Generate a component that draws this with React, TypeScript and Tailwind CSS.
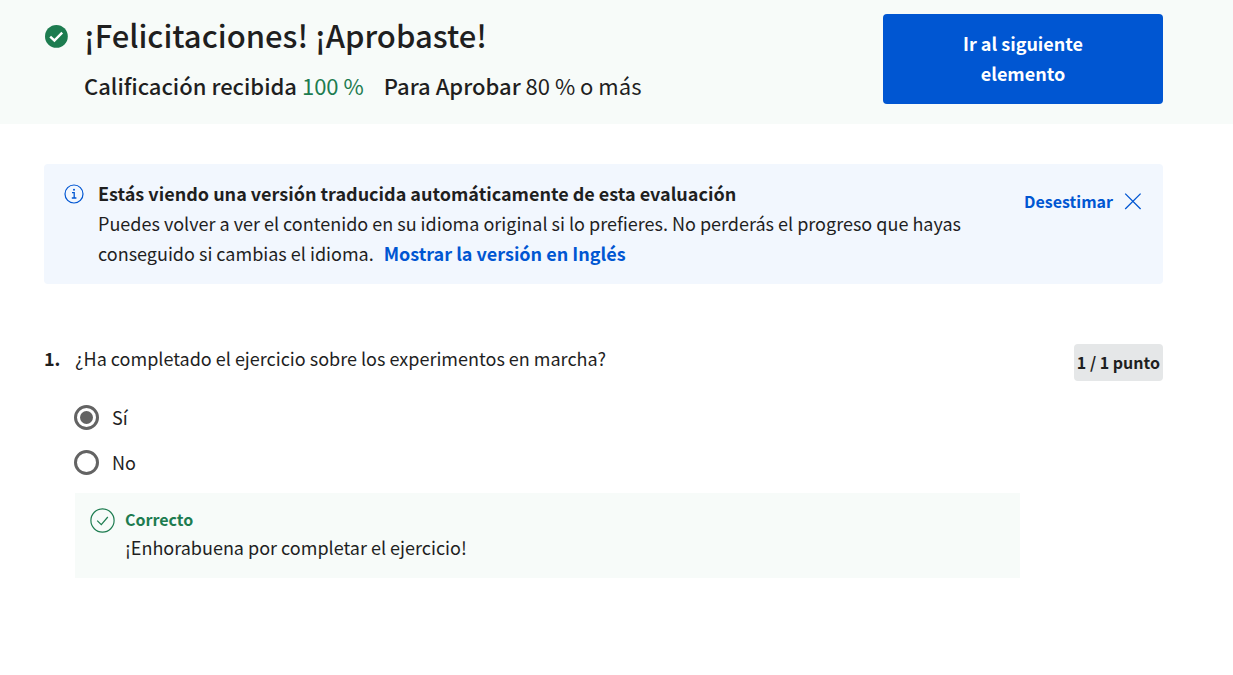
import { useState } from 'react';

function PassedIcon() {
  return (
    <svg viewBox="0 0 24 24" className="size-6 shrink-0" aria-hidden="true">
      <circle cx="12.4" cy="12.4" r="11.4" fill="#1d7c50" />
      <path d="M6.2 12.6l4.2 3.9 7.8-7.9" fill="none" stroke="#fff" strokeWidth="2.4" />
    </svg>
  );
}

function InfoIcon() {
  return (
    <svg viewBox="0 0 20 20" className="mt-1.5 size-5 shrink-0" aria-hidden="true" fill="none" stroke="#0056d2">
      <circle cx="10" cy="10" r="9" strokeWidth="1.2" />
      <path d="M8 8.7h2.2v5M7.8 14h4.6" strokeWidth="1.3" />
      <circle cx="10" cy="5.8" r="1" fill="#0056d2" stroke="none" />
    </svg>
  );
}

function CloseIcon() {
  return (
    <svg viewBox="0 0 20 20" className="size-5" aria-hidden="true" fill="none" stroke="#0056d2" strokeWidth="1.3">
      <path d="M2.2 2.6l15.4 15.4M17.6 2.6l-15.4 15.4" />
    </svg>
  );
}

function CorrectIcon() {
  return (
    <svg viewBox="0 0 25 25" className="size-[25px] shrink-0" aria-hidden="true" fill="none" stroke="#1d7c50" strokeWidth="1.2">
      <circle cx="12.5" cy="12.5" r="11.6" />
      <path d="M7.2 12.6l4.1 4 6.5-7.6" />
    </svg>
  );
}

const options = ['Sí', 'No'];

export default function App() {
  const [answer, setAnswer] = useState('Sí');
  const [showNotice, setShowNotice] = useState(true);

  return (
    <main className="min-h-screen bg-white font-['Noto_Sans_CJK_SC',sans-serif] text-lg leading-[30px] text-[#1f1f1f]">
      <header className="flex items-start justify-between bg-[#f7fbf9] pt-3.5 pr-[70px] pb-5 pl-11">
        <div className="flex gap-4">
          <div className="pt-2.5">
            <PassedIcon />
          </div>
          <div>
            <h1 className="text-[31px] leading-[42px] font-medium">¡Felicitaciones! ¡Aprobaste!</h1>
            <p className="mt-[13px] flex gap-5 text-[22px] leading-8">
              <span>
                <span className="font-medium">Calificación recibida</span> <span className="text-[#1d7c50]">100 %</span>
              </span>
              <span>
                <span className="font-medium">Para Aprobar</span> 80 % o más
              </span>
            </p>
          </div>
        </div>
        <button type="button" className="w-70 rounded bg-[#0056d2] px-16 pt-3.5 pb-4 font-bold text-white">
          Ir al siguiente elemento
        </button>
      </header>

      <div className="pt-10 pr-[70px] pb-10 pl-11">
        {showNotice && (
          <section className="flex items-start rounded bg-[#f2f7fe] px-5 pt-3.5 pb-4">
            <InfoIcon />
            <div className="ml-3.5 max-w-[880px] grow">
              <h2 className="font-bold">Estás viendo una versión traducida automáticamente de esta evaluación</h2>
              <p>
                Puedes volver a ver el contenido en su idioma original si lo prefieres. No perderás el progreso que hayas
                conseguido si cambias el idioma.
                <a href="#original" className="ml-2.5 font-bold text-[#0056d2]">
                  Mostrar la versión en Inglés
                </a>
              </p>
            </div>
            <button
              type="button"
              onClick={() => setShowNotice(false)}
              className="mt-[11px] ml-auto flex items-center gap-2.5 text-base font-bold text-[#0056d2]"
            >
              Desestimar
              <CloseIcon />
            </button>
          </section>
        )}

        <section className="mt-15 flex items-start">
          <span className="w-[31px] shrink-0 leading-7 font-bold">1.</span>
          <fieldset className="min-w-0 grow">
            <legend className="leading-7">¿Ha completado el ejercicio sobre los experimentos en marcha?</legend>
            <div className="mt-[30px] flex flex-col gap-[15px]">
              {options.map((option) => (
                <label key={option} className="flex items-center gap-[13px]">
                  <input
                    type="radio"
                    name="answer"
                    checked={answer === option}
                    onChange={() => setAnswer(option)}
                    className="-ml-px size-[25px] appearance-none rounded-full border-[3px] border-[#636363] bg-white bg-clip-content p-[3px] checked:bg-[#636363]"
                  />
                  {option}
                </label>
              ))}
            </div>
            <div className="mt-4 flex gap-2.5 bg-[#f7fbf9] px-[15px] pt-3.5 pb-4">
              <div className="pt-px">
                <CorrectIcon />
              </div>
              <div>
                <p className="text-base leading-[25px] font-bold text-[#1d7c50]">Correcto</p>
                <p>¡Enhorabuena por completar el ejercicio!</p>
              </div>
            </div>
          </fieldset>
          <span className="ml-[54px] shrink-0 rounded bg-[#e5e7e8] px-[3px] pt-1 pb-[5px] text-base leading-7 font-bold">
            1 / 1 punto
          </span>
        </section>
      </div>
    </main>
  );
}
